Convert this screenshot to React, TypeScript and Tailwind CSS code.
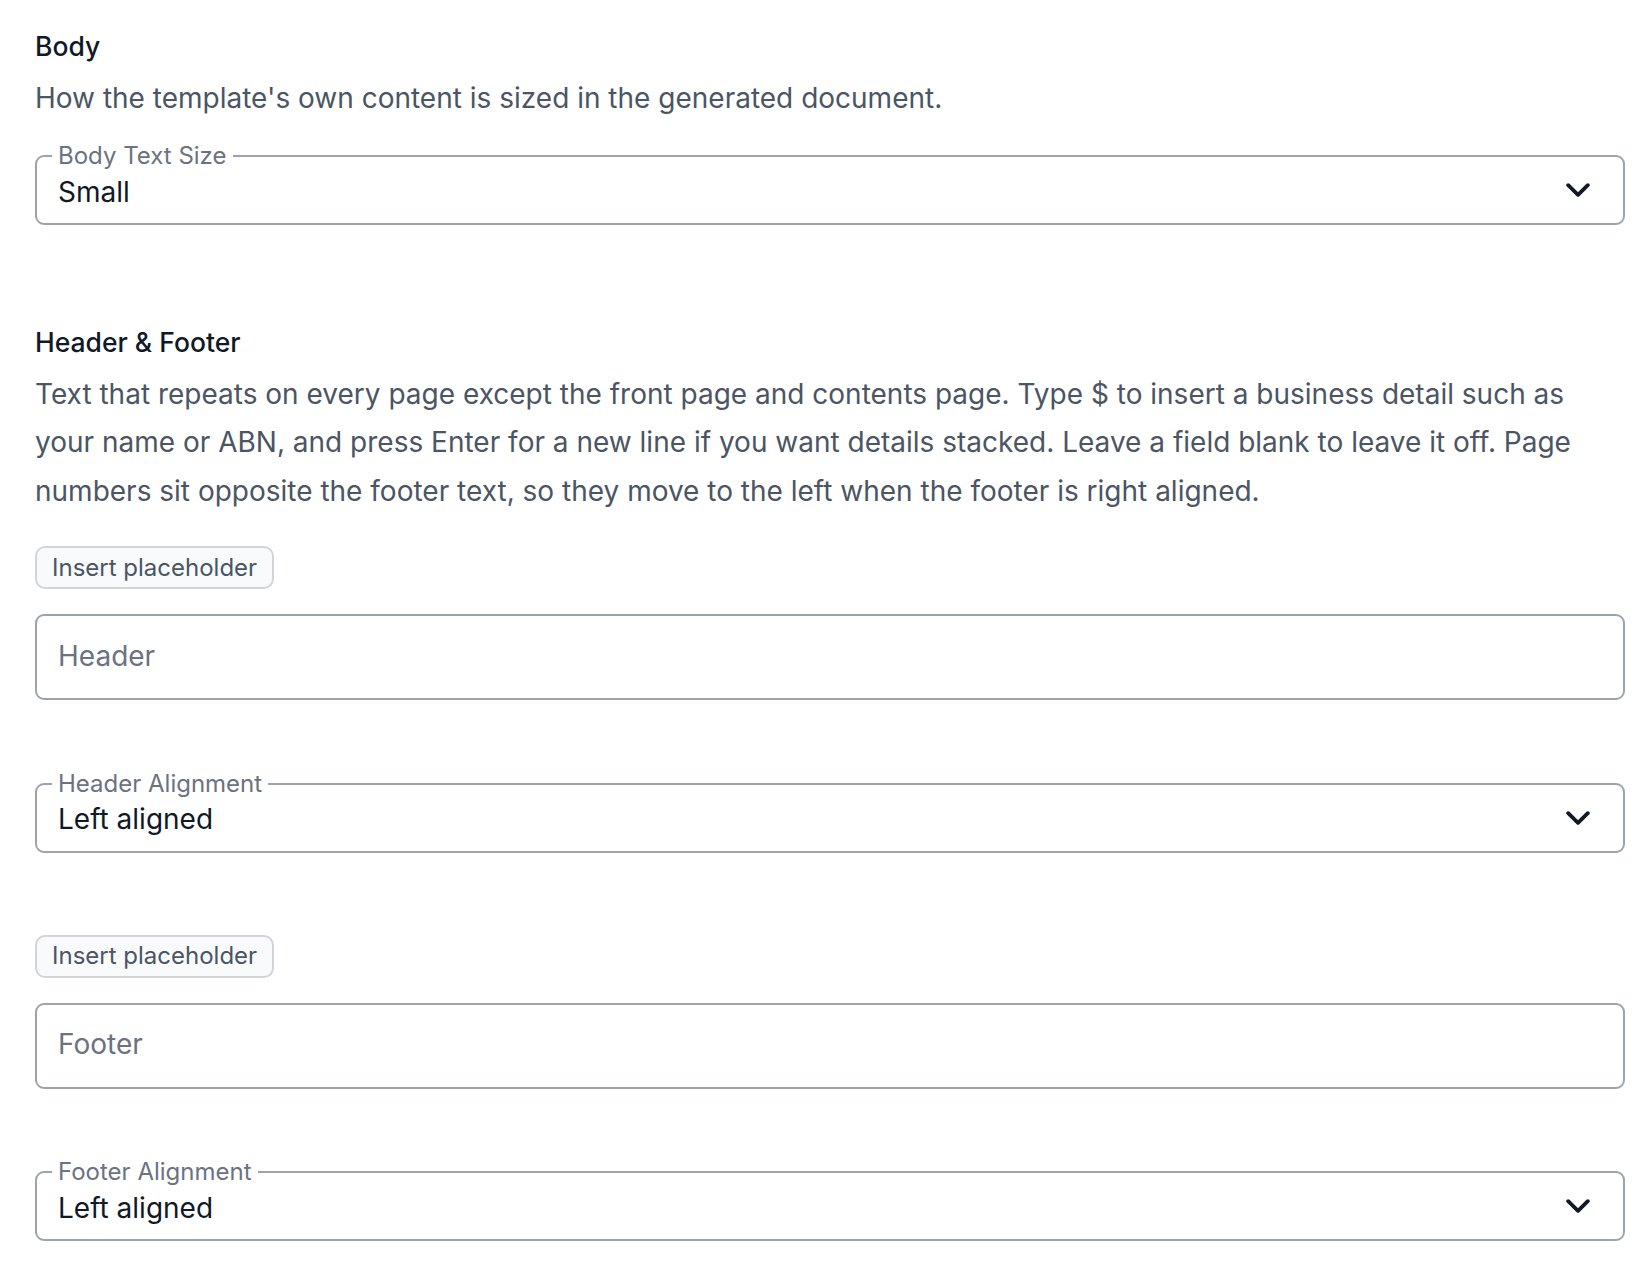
import React from 'react';

// Notched-outline select, label sits on the top border
function SelectField({ label, value }: { label: string; value: string }) {
  return (
    <div className="relative flex h-[70px] items-center rounded-[9px] border-2 border-[#9ca3af] pl-[21px] pr-[33px] pt-[3px]">
      <span className="absolute left-[15px] top-[-13px] bg-white px-[6px] text-[24px] leading-[24px] text-[#6b7280]">
        {label}
      </span>
      <span className="flex-1 text-[28px] leading-[36px] text-[#111827]">{value}</span>
      <svg width="24" height="14" viewBox="0 0 24 14" fill="none" className="mt-[-3px]">
        <path d="M2.2 2.2 12 11.8 21.8 2.2" stroke="#111827" strokeWidth="3.8" strokeLinecap="round" strokeLinejoin="round" />
      </svg>
    </div>
  );
}

function TextField({ placeholder }: { placeholder: string }) {
  return (
    <textarea
      rows={1}
      placeholder={placeholder}
      className="block h-[86px] w-full resize-none overflow-hidden rounded-[9px] border-2 border-[#9ca3af] bg-white px-[21px] pt-[19.5px] text-[28px] leading-[40px] text-[#111827] outline-none placeholder:text-[#6b7280]"
    />
  );
}

function PlaceholderButton() {
  return (
    <button
      type="button"
      className="h-[43px] rounded-[10px] border-2 border-[#d1d5db] bg-[#f8fafc] px-[15px] text-[24px] leading-none text-[#4b5563]"
    >
      Insert placeholder
    </button>
  );
}

export default function App() {
  return (
    <div className="min-h-screen bg-white pl-[35px] pr-[17px] pt-[28px] pb-[40px] font-['Inter',sans-serif] antialiased">
      {/* Body */}
      <h2 className="text-[26.5px] font-medium leading-[36px] text-[#111827]">Body</h2>
      <p className="mt-[10.2px] text-[28px] leading-[48.6px] text-[#4b5563]">
        How the template's own content is sized in the generated document.
      </p>
      <div className="mt-[32.4px]">
        <SelectField label="Body Text Size" value="Small" />
      </div>

      {/* Header & Footer */}
      <h2 className="mt-[99px] text-[26.5px] font-medium leading-[36px] text-[#111827]">Header &amp; Footer</h2>
      <p className="mt-[9.4px] text-[28px] leading-[48.6px] text-[#4b5563]">
        Text that repeats on every page except the front page and contents page. Type $ to insert a business detail such
        as your name or ABN, and press Enter for a new line if you want details stacked. Leave a field blank to leave it
        off. Page numbers sit opposite the footer text, so they move to the left when the footer is right aligned.
      </p>

      <div className="mt-[31px]">
        <PlaceholderButton />
      </div>
      <div className="mt-[25px]">
        <TextField placeholder="Header" />
      </div>
      <div className="mt-[82.4px]">
        <SelectField label="Header Alignment" value="Left aligned" />
      </div>

      <div className="mt-[82px]">
        <PlaceholderButton />
      </div>
      <div className="mt-[25px]">
        <TextField placeholder="Footer" />
      </div>
      <div className="mt-[82.3px]">
        <SelectField label="Footer Alignment" value="Left aligned" />
      </div>
    </div>
  );
}
